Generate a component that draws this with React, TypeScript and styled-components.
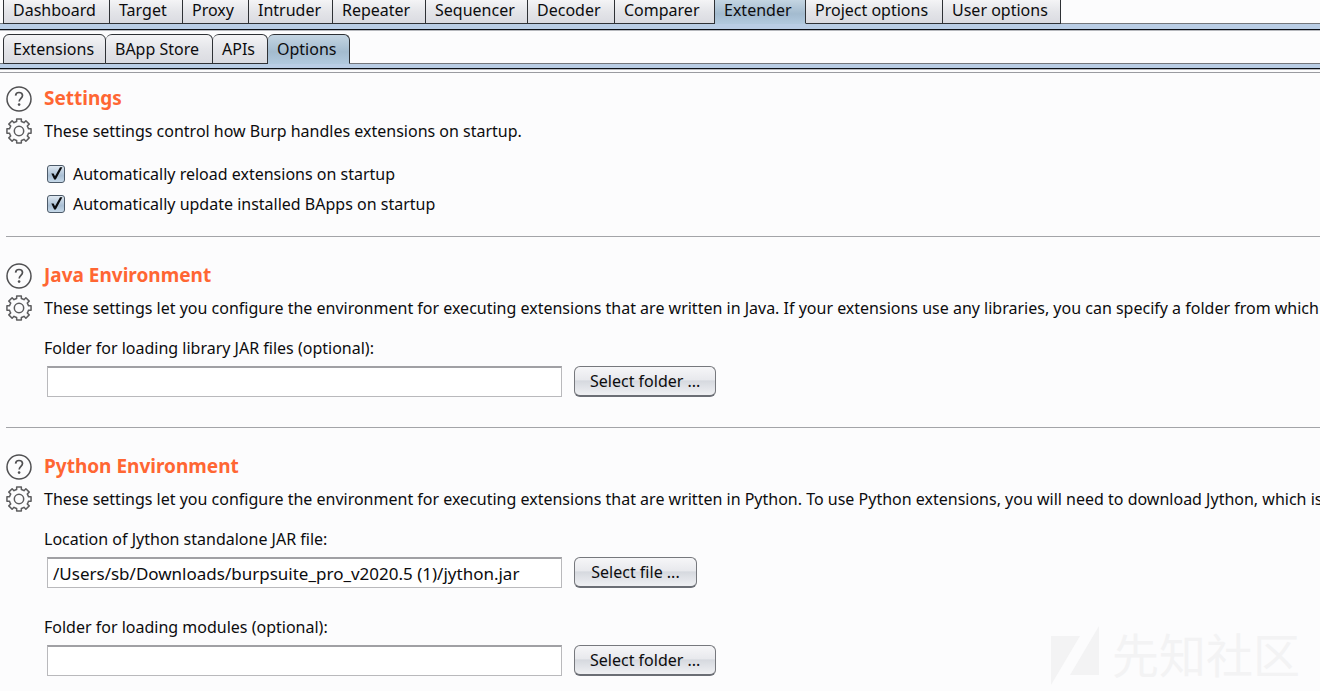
import React, { useId, useState } from "react";
import styled, { createGlobalStyle, css } from "styled-components";

const fontStack = `"Noto Sans", "Open Sans", "Liberation Sans", sans-serif`;

const GlobalStyle = createGlobalStyle`
  *, *::before, *::after { box-sizing: border-box; }
  body {
    margin: 0;
    background: #fcfcfd;
    color: #0c0c0e;
    font: 16px/24px ${fontStack};
    overflow: hidden;
  }
`;

const Page = styled.div`
  position: relative;
  min-height: 100vh;
  overflow: hidden;
`;

const Strip = styled.nav<{ $nested?: boolean }>`
  display: flex;
  padding-left: 3px;
  box-shadow: inset 0 -1px 0 #74777c;
  ${(p) => p.$nested && css`padding-top: 4px;`}
`;

const Band = styled.div<{ $nested?: boolean }>`
  height: ${(p) => (p.$nested ? 5 : 6)}px;
  background: #b9cde5;
  border-bottom: 1px solid #0b0f16;
  box-shadow: 0 1px 0 #51565e66;
`;

const Tab = styled.button<{ $active?: boolean; $nested?: boolean; $width: number }>`
  flex: none;
  width: ${(p) => p.$width}px;
  height: ${(p) => (p.$nested ? 30 : 24)}px;
  padding: ${(p) => (p.$nested ? "0 0 1px 9px" : "0 0 3px 9px")};
  border: solid #2e3135;
  border-width: ${(p) => (p.$nested ? "1px 1px 1px 0" : "0 1px 1px 0")};
  border-radius: ${(p) => (p.$nested ? "6px 6px 0 0" : "0")};
  background: linear-gradient(#f4f4f6, #e4e5e9 50%, #dadbe1);
  color: inherit;
  font: inherit;
  line-height: 20px;
  text-align: left;
  white-space: nowrap;
  &:first-child {
    border-left-width: 1px;
  }
  ${(p) =>
    p.$active &&
    css`
      background: linear-gradient(#c4d5e2, #a3bbcf 60%, #b0c8dd);
      border-bottom-color: #b0c8dd;
    `}
`;

const Panel = styled.main`
  margin-top: 3px;
  border-top: 1px solid #9a9ba0;
`;

const Section = styled.section`
  display: grid;
  grid-template-columns: 26px 1fr;
  column-gap: 12px;
  margin-left: 6px;
  padding: 26px 0 30px;
  border-bottom: 1px solid #a3a4a8;
  overflow: hidden;
  &:first-child {
    padding: 13px 0 17px;
  }
  &:last-child {
    border-bottom: 0;
    padding-bottom: 0;
  }
`;

const IconColumn = styled.div`
  display: flex;
  flex-direction: column;
  gap: 6px;
`;

const IconButton = styled.button`
  display: block;
  width: 26px;
  height: 26px;
  padding: 0;
  border: 0;
  background: none;
  svg { display: block; }
`;

const Body = styled.div`
  min-width: 0;
  white-space: nowrap;
`;

const Title = styled.h2`
  margin: 0;
  color: #ff6633;
  font-size: 19px;
  line-height: 24px;
  font-weight: 700;
`;

const Description = styled.p`
  margin: 9px 0 16px;
`;

const CheckRow = styled.label`
  display: flex;
  align-items: center;
  gap: 8px;
  height: 30px;
  padding-left: 3px;
`;

const CheckWrap = styled.span`
  display: grid;
  width: 18px;
  height: 18px;
  & > * { grid-area: 1 / 1; }
  svg { pointer-events: none; }
`;

const Checkbox = styled.input`
  appearance: none;
  width: 18px;
  height: 18px;
  margin: 0;
  border: 1px solid #4c5a69;
  border-radius: 3px;
  background: linear-gradient(#dfe8f1, #a9bfd4 60%, #c6d9e9);
  &:not(:checked) + svg { visibility: hidden; }
`;

const Field = styled.div`
  display: grid;
  gap: 6px;
  & + & { margin-top: 27px; }
`;

const FieldRow = styled.div`
  display: flex;
  align-items: center;
  gap: 12px;
  padding-left: 3px;
`;

const TextBox = styled.input`
  width: 515px;
  height: 31px;
  padding: 0 5px;
  border: 1px solid #b9b9bc;
  border-top: 2px solid #a0a0a4;
  border-radius: 0;
  background: #fff;
  color: inherit;
  font: inherit;
  font-size: 17px;
  outline: 0;
`;

const PushButton = styled.button`
  height: 31px;
  padding: 0 15px;
  min-width: 123px;
  border: 1px solid #76787d;
  border-bottom: 2px solid #6b6e75;
  border-radius: 6px;
  background: linear-gradient(#f6f6f8, #e8e9ed 45%, #d6d9df 50%, #eff0f3);
  color: inherit;
  font: inherit;
`;

const Watermark = styled.div`
  position: absolute;
  right: 20px;
  bottom: 5px;
  display: flex;
  align-items: flex-start;
  gap: 12px;
  color: #f3f3f4;
  font: 400 47px/54px "Noto Sans CJK SC", sans-serif;
  pointer-events: none;
`;

const HelpIcon = () => (
  <svg width="26" height="26" viewBox="0 0 26 26" fill="none" stroke="#505052">
    <circle cx="13" cy="13" r="12" strokeWidth="1.5" />
    <path d="M9.6 9.6C9.7 7.5 11 6.5 13 6.5s3.5 1.1 3.5 3c0 2.6-3.3 3-3.3 6" strokeWidth="1.7" />
    <circle cx="13.1" cy="18.6" r="1.3" fill="#505052" stroke="none" />
  </svg>
);

const GearIcon = () => {
  const teeth = Array.from({ length: 8 }, (_, i) => {
    const at = (r: number, deg: number) => {
      const a = ((i * 45 + deg - 90) * Math.PI) / 180;
      return `${(13 + r * Math.cos(a)).toFixed(2)} ${(13 + r * Math.sin(a)).toFixed(2)}`;
    };
    return `${i ? "L" : "M"}${at(9.7, -14)}L${at(12.3, -11)}L${at(12.3, 11)}L${at(9.7, 14)}A9.7 9.7 0 0 1 ${at(9.7, 31)}`;
  }).join("");
  return (
    <svg width="26" height="26" viewBox="0 0 26 26" fill="none" stroke="#5c5c5e" strokeWidth="1.5" strokeLinejoin="round">
      <path d={`${teeth}Z`} />
      <circle cx="13" cy="13" r="4.7" />
    </svg>
  );
};

const CheckIcon = () => (
  <svg width="18" height="18" viewBox="0 0 18 18" fill="#0a0b0d">
    <path d="M4.3 8.6H6.6L8 11.3 13 2.3H15.4L8.8 14.5H7.2Z" />
  </svg>
);

const WatermarkLogo = () => (
  <svg width="49" height="60" viewBox="0 0 49 60" fill="currentColor">
    <path d="M0 10H29L0 59ZM48 0V49H19Z" />
  </svg>
);

const mainTabs: [string, number][] = [
  ["Dashboard", 107],
  ["Target", 73],
  ["Proxy", 66],
  ["Intruder", 84],
  ["Repeater", 93],
  ["Sequencer", 102],
  ["Decoder", 87],
  ["Comparer", 100],
  ["Extender", 91],
  ["Project options", 137],
  ["User options", 118],
];

const extenderTabs: [string, number][] = [
  ["Extensions", 103],
  ["BApp Store", 107],
  ["APIs", 55],
  ["Options", 82],
];

function TabStrip({ tabs, initial, nested }: { tabs: [string, number][]; initial: string; nested?: boolean }) {
  const [active, setActive] = useState(initial);
  return (
    <>
      <Strip $nested={nested}>
        {tabs.map(([name, width]) => (
          <Tab key={name} $width={width} $nested={nested} $active={name === active} onClick={() => setActive(name)}>
            {name}
          </Tab>
        ))}
      </Strip>
      <Band $nested={nested} />
    </>
  );
}

function OptionSection({ title, description, children }: { title: string; description: string; children: React.ReactNode }) {
  return (
    <Section>
      <IconColumn>
        <IconButton aria-label="Help"><HelpIcon /></IconButton>
        <IconButton aria-label="Section options"><GearIcon /></IconButton>
      </IconColumn>
      <Body>
        <Title>{title}</Title>
        <Description>{description}</Description>
        {children}
      </Body>
    </Section>
  );
}

function CheckOption({ label }: { label: string }) {
  return (
    <CheckRow>
      <CheckWrap>
        <Checkbox type="checkbox" defaultChecked />
        <CheckIcon />
      </CheckWrap>
      {label}
    </CheckRow>
  );
}

function PathField({ label, value = "", action }: { label: string; value?: string; action: string }) {
  const id = useId();
  return (
    <Field>
      <label htmlFor={id}>{label}</label>
      <FieldRow>
        <TextBox id={id} type="text" defaultValue={value} spellCheck={false} />
        <PushButton>{action}</PushButton>
      </FieldRow>
    </Field>
  );
}

export default function App() {
  return (
    <Page>
      <GlobalStyle />
      <TabStrip tabs={mainTabs} initial="Extender" />
      <TabStrip tabs={extenderTabs} initial="Options" nested />
      <Panel>
        <OptionSection title="Settings" description="These settings control how Burp handles extensions on startup.">
          <CheckOption label="Automatically reload extensions on startup" />
          <CheckOption label="Automatically update installed BApps on startup" />
        </OptionSection>
        <OptionSection
          title="Java Environment"
          description="These settings let you configure the environment for executing extensions that are written in Java. If your extensions use any libraries, you can specify a folder from which"
        >
          <PathField label="Folder for loading library JAR files (optional):" action="Select folder ..." />
        </OptionSection>
        <OptionSection
          title="Python Environment"
          description="These settings let you configure the environment for executing extensions that are written in Python. To use Python extensions, you will need to download Jython, which is"
        >
          <PathField
            label="Location of Jython standalone JAR file:"
            value="/Users/sb/Downloads/burpsuite_pro_v2020.5 (1)/jython.jar"
            action="Select file ..."
          />
          <PathField label="Folder for loading modules (optional):" action="Select folder ..." />
        </OptionSection>
      </Panel>
      <Watermark>
        <WatermarkLogo />
        <span>先知社区</span>
      </Watermark>
    </Page>
  );
}
